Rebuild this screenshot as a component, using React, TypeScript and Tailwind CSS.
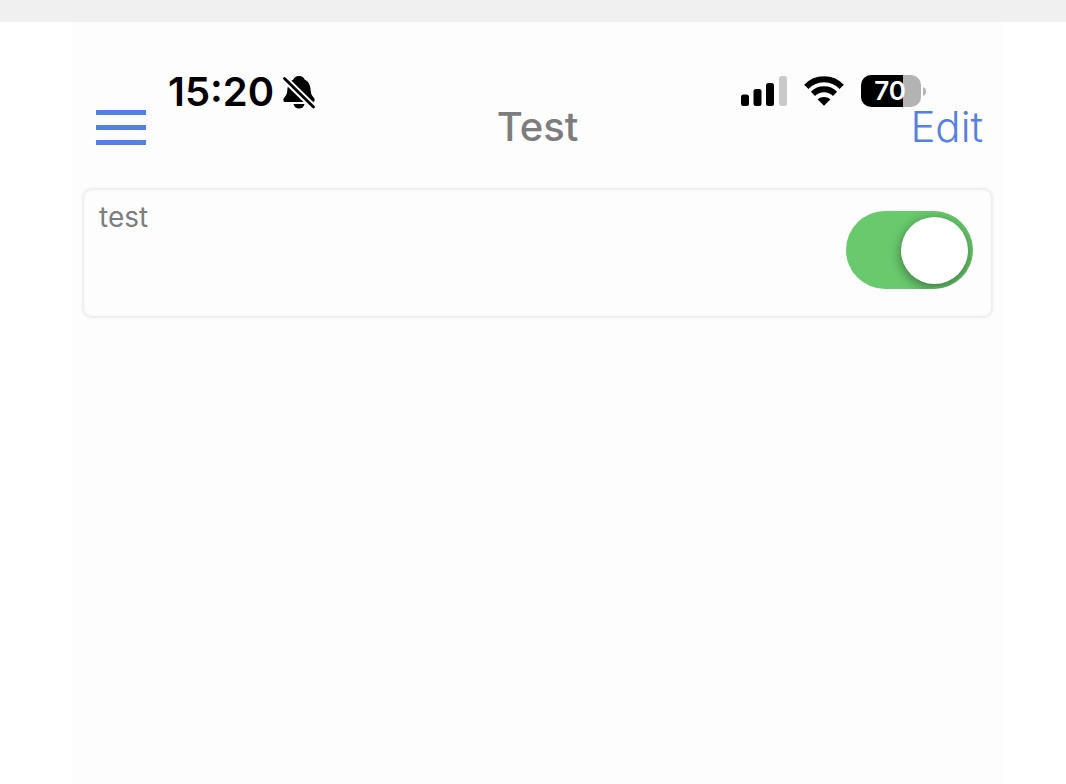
import { useState } from "react";

function BellOffIcon() {
  return (
    <svg viewBox="0 0 34 36" className="h-9 w-[34px]" aria-hidden="true">
      <path
        d="M17 2c3.200 0 5 1.600 5.600 3.500 4.600 2.200 5.800 6.500 6.100 11 .2 3.800 1.700 5.500 3.300 7.500 1.300 1.800.6 4-1.600 4H3.600c-2.200 0-2.900-2.200-1.600-4 1.600-2 3.100-3.700 3.300-7.500.3-4.500 1.500-8.800 6.100-11C12 3.600 13.800 2 17 2z"
        fill="#000"
      />
      <path d="M11.500 30h11c-.6 3-2.800 4.500-5.500 4.500S12.100 33 11.500 30z" fill="#000" />
      <path d="M-1 1.200L35 36.500" stroke="#fdfdfd" strokeWidth="6.800" />
      <path d="M2.500 4.500L31.500 33" stroke="#000" strokeWidth="2.800" strokeLinecap="round" />
    </svg>
  );
}

function SignalIcon() {
  return (
    <svg viewBox="0 0 46 30" className="h-[30px] w-[46px]" role="img" aria-label="Signal">
      <rect x="0" y="18.500" width="8" height="11.500" rx="2.500" />
      <rect x="12.500" y="13" width="8" height="17" rx="2.500" />
      <rect x="25" y="7" width="8" height="23" rx="2.500" />
      <rect x="38" y="0" width="8" height="30" rx="2.500" fill="#c9c9c9" />
    </svg>
  );
}

function WifiIcon() {
  return (
    <svg viewBox="0 0 40 30" className="h-[30px] w-10" role="img" aria-label="Wi-Fi">
      <g fill="none" stroke="#000" strokeWidth="6">
        <path d="M2.300 10.800C12 .7 28 .7 37.700 10.800" />
        <path d="M9 17.800C15.200 11.800 24.800 11.800 31 17.800" />
      </g>
      <path d="M20 29.800l-6.300-6.400c3.600-3.200 9-3.200 12.600 0z" />
    </svg>
  );
}

function Battery() {
  return (
    <div className="flex items-center gap-0.5">
      <div className="flex h-8 w-[60px] items-center justify-center rounded-[10px] bg-linear-to-r from-black from-70% to-[#b3b3b3] to-70% pr-0.5 text-[26px] leading-8 font-semibold text-white">
        70
      </div>
      <svg viewBox="0 0 3 9" className="h-[9px] w-[3px]" aria-hidden="true">
        <path d="M0 0C4 1.500 4 7.500 0 9z" fill="#b3b3b3" />
      </svg>
    </div>
  );
}

function StatusBar() {
  return (
    <div className="flex h-8 items-center justify-between pr-[77px] pl-24 text-black">
      <div className="flex items-center gap-2 pt-0.5">
        <time className="text-[40px] leading-8 font-semibold">15:20</time>
        <BellOffIcon />
      </div>
      <div className="flex items-center gap-[17px]">
        <SignalIcon />
        <WifiIcon />
        <Battery />
      </div>
    </div>
  );
}

export default function App() {
  const [on, setOn] = useState(true);
  return (
    <div className="flex min-h-screen flex-col bg-white font-['Inter',sans-serif]">
      <div className="h-[22px] bg-[#f0f0f0]" />
      <main className="mr-[63px] ml-[72px] flex-1 bg-[#fdfdfd] pt-[53px]">
        <StatusBar />
        <header className="grid h-[39px] grid-cols-[1fr_auto_1fr] items-center px-5">
          <button type="button" aria-label="Menu" className="flex w-fit flex-col gap-2.5 pl-1">
            <span className="h-[5px] w-[50px] bg-[#5680e0]" />
            <span className="h-[5px] w-[50px] bg-[#5680e0]" />
            <span className="h-[5px] w-[50px] bg-[#5680e0]" />
          </button>
          <h1 className="text-[40px] leading-10 font-medium text-[#7d7d7d]">Test</h1>
          <button type="button" className="justify-self-end text-[42px] leading-10 font-light text-[#5680e0]">
            Edit
          </button>
        </header>
        <section className="mx-2.5 mt-[42px] flex h-[130px] items-start justify-between rounded-[10px] border-2 border-[#f0f0f0] bg-[#fdfdfd] pt-[21px] pr-[18px] pl-[15px] shadow-[0_0_3px_#f0f0f0,inset_0_0_2px_#f0f0f0]">
          <label htmlFor="test-switch" className="-mt-2.5 text-[28px] leading-8 text-[#7d7d7d]">
            test
          </label>
          <input
            id="test-switch"
            type="checkbox"
            role="switch"
            checked={on}
            onChange={() => setOn(!on)}
            className="flex h-[78px] w-[127px] cursor-pointer appearance-none items-center overflow-hidden rounded-full bg-gray-300 px-[5px] before:size-[67px] before:rounded-full before:bg-white before:shadow-[0_3px_12px_rgba(0,0,0,0.45)] checked:justify-end checked:bg-[#69ca6d]"
          />
        </section>
      </main>
    </div>
  );
}
